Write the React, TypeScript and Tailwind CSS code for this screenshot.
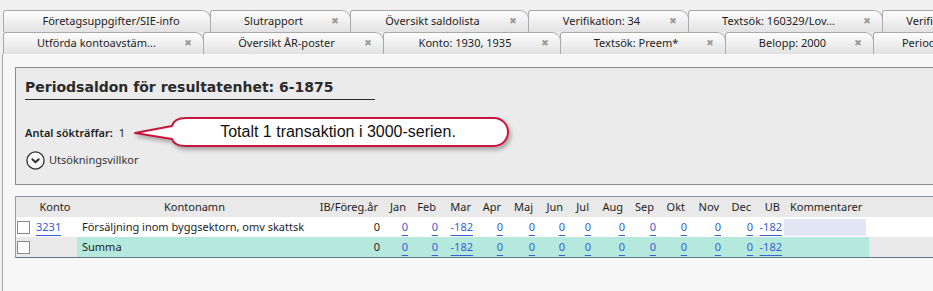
import React from "react";

const ui = { fontFamily: '"Noto Sans", "Open Sans", sans-serif' };

type TabProps = { label: string; w: number; close?: boolean };

function Tab({ label, w, close = true }: TabProps) {
  return (
    <div
      style={{ width: w }}
      className="relative -mr-[1px] flex h-full shrink-0 items-center rounded-tl-[3px] rounded-tr-[9px] border border-b-0 border-[#a9a9a9] bg-gradient-to-b from-[#fdfdfd] to-[#e2e2e2] text-[11px] text-[#1e1e1e]"
    >
      <span className="flex-1 overflow-hidden whitespace-nowrap pl-2 text-center">{label}</span>
      {close && (
        <span className="w-[22px] pr-[8px] text-center text-[9px] text-[#9a9a9a]" style={{ fontFamily: '"DejaVu Sans", sans-serif' }}>
          ✖
        </span>
      )}
    </div>
  );
}

const months = ["Jan", "Feb", "Mar", "Apr", "Maj", "Jun", "Jul", "Aug", "Sep", "Okt", "Nov", "Dec", "UB"];
const vals = ["0", "0", "-182", "0", "0", "0", "0", "0", "0", "0", "0", "0", "-182"];

const gridCols =
  "grid grid-cols-[17px_44px_235px_70px_28px_30px_35px_30px_32px_30px_26px_34px_31px_31px_34px_32px_29px_85px_1fr]";

function Link({ children }: { children: React.ReactNode }) {
  return <span className="text-[#3560d0] underline decoration-[#3560d0] underline-offset-[4px]">{children}</span>;
}

function Checkbox() {
  return <div className="ml-[1px] h-[13px] w-[13px] border border-[#8a8a8a] bg-white" />;
}

export default function App() {
  return (
    <div className="flex h-[291px] w-[933px] flex-col overflow-hidden bg-[#f0f0f0]" style={ui}>
      <div className="overflow-hidden pl-[3px] pt-[10px]">
        <div className="flex h-[22px]">
          <Tab label="Företagsuppgifter/SIE-info" w={208} close={false} />
          <Tab label="Slutrapport" w={141} />
          <Tab label="Översikt saldolista" w={179} />
          <Tab label="Verifikation: 34" w={161} />
          <Tab label="Textsök: 160329/Lov..." w={195} />
          <Tab label="Verifikation: 35" w={140} />
        </div>
        <div className="flex h-[22px]">
          <Tab label="Utförda kontoavstäm..." w={201} />
          <Tab label="Översikt ÅR-poster" w={181} />
          <Tab label="Konto: 1930, 1935" w={178} />
          <Tab label="Textsök: Preem*" w={166} />
          <Tab label="Belopp: 2000" w={149} />
          <Tab label="Periodsaldon" w={140} />
        </div>
      </div>

      <div className="ml-[2px] flex-1 border-l border-[#a7a7a7] bg-[#f7f7f7] pl-[12px] pt-[13px]">
        <div className="relative h-[118px] border border-r-0 border-[#8c8c8c] bg-[#ebebeb] pl-[9px] pt-[11px]">
          <div
            className="w-[350px] whitespace-nowrap border-b border-[#2a2a2a] pb-[4px] text-[14px] font-bold leading-[16px] text-[#2b2b2b]"
            style={{ fontFamily: '"DejaVu Sans", Verdana, sans-serif' }}
          >
            Periodsaldon för resultatenhet: 6-1875
          </div>
          <div className="mt-[25px] flex h-[16px] items-center text-[11px] text-[#1e1e1e]">
            <span className="font-semibold">Antal sökträffar:</span>
            <span className="ml-[6px]">1</span>
          </div>
          <div className="mt-[10px] flex h-[18px] items-center text-[11px] text-[#333]">
            <svg width="19" height="19" viewBox="0 0 19 19" className="ml-[1px]">
              <circle cx="9.5" cy="9.5" r="8.6" fill="#fafafa" stroke="#2e2e2e" strokeWidth="1.3" />
              <path d="M6.3 8.2 L9.5 11.3 L12.7 8.2" fill="none" stroke="#2e2e2e" strokeWidth="1.9" strokeLinecap="round" strokeLinejoin="round" />
            </svg>
            <span className="ml-[4px]">Utsökningsvillkor</span>
          </div>

          {/* callout overlay */}
          <div className="absolute left-[115px] top-[45px] h-[40px] w-[390px]">
            <svg width="390" height="40" viewBox="0 0 390 40" className="absolute left-0 top-0 overflow-visible">
              <defs>
                <filter id="sh" x="-10%" y="-30%" width="120%" height="170%">
                  <feDropShadow dx="2" dy="3" stdDeviation="2" floodColor="#000" floodOpacity="0.3" />
                </filter>
              </defs>
              <path
                d="M4 20 L41 13 Q43 5 55 5 L363 5 A14 14 0 0 1 363 33 L55 33 Q43 33 41 26 Z"
                fill="#ffffff"
                stroke="#c8183b"
                strokeWidth="2"
                strokeLinejoin="round"
                filter="url(#sh)"
              />
            </svg>
            <div
              className="absolute left-[42px] top-[5px] flex h-[27px] w-[330px] items-center justify-center whitespace-nowrap text-[16px] text-[#111]"
              style={{ fontFamily: '"Liberation Sans", Arial, sans-serif' }}
            >
              Totalt 1 transaktion i 3000-serien.
            </div>
          </div>
        </div>

        <div className="mt-[11px] border-b border-l border-t border-b-[#5f7590] border-l-[#9aa0a6] border-t-[#8e96a0] text-[11px] text-[#1e1e1e]">
          <div className={`${gridCols} h-[20px] items-center whitespace-nowrap bg-[#e9e9e9]`}>
            <div />
            <div className="text-center">Konto</div>
            <div className="text-center">Kontonamn</div>
            <div className="pr-[4px] text-right">IB/Föreg.år</div>
            {months.map((m) => (
              <div key={m} className="pr-[4px] text-right">
                {m}
              </div>
            ))}
            <div className="pl-[6px]">Kommentarer</div>
            <div />
          </div>
          <div className={`${gridCols} h-[20px] items-center whitespace-nowrap bg-white`}>
            <Checkbox />
            <div className="pl-[3px]">
              <Link>3231</Link>
            </div>
            <div className="overflow-hidden pl-[5px]">Försäljning inom byggsektorn, omv skattsk</div>
            <div className="pr-[2px] text-right">0</div>
            {vals.map((v, i) => (
              <div key={i} className="pr-[2px] text-right">
                <Link>{v}</Link>
              </div>
            ))}
            <div className="h-[17px] w-[82px] bg-[#e2e6f5]" />
            <div />
          </div>
          <div className={`${gridCols} h-[20px] items-center whitespace-nowrap bg-[#e9e9e9]`}>
            <Checkbox />
            <div />
            <div className="flex h-full items-center bg-[#b5e9de] pl-[5px]">Summa</div>
            <div className="flex h-full items-center justify-end bg-[#b5e9de] pr-[2px]">0</div>
            {vals.map((v, i) => (
              <div key={i} className="flex h-full items-center justify-end bg-[#b5e9de] pr-[2px]">
                <Link>{v}</Link>
              </div>
            ))}
            <div className="h-full bg-[#b5e9de]" />
            <div />
          </div>
        </div>
      </div>
    </div>
  );
}
